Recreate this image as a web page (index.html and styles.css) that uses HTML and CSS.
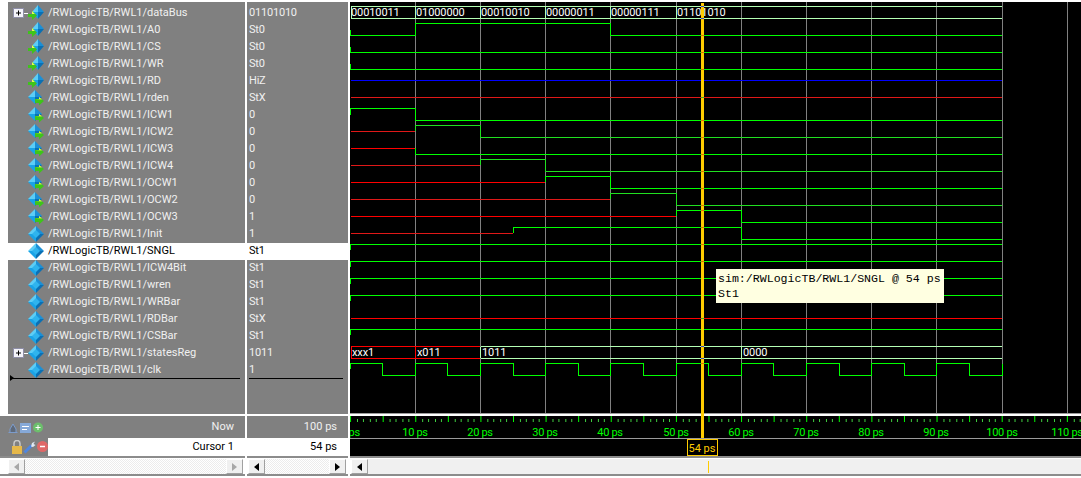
FILE: index.html
```html
<!DOCTYPE html>
<html lang="en">
<head>
    <meta charset="UTF-8">
    <title>Wave</title>
    <link rel="stylesheet" href="styles.css">
</head>
<body>

<svg class="defs" width="0" height="0">
    <defs>
        <symbol id="gem" viewBox="0 0 16 16">
            <polygon points="8,0 8,8 0,8" fill="#5ccdf6"/>
            <polygon points="8,0 16,8 8,8" fill="#1b8fd6"/>
            <polygon points="0,8 8,8 8,16" fill="#1aa3e6"/>
            <polygon points="16,8 8,8 8,16" fill="#0a70b4"/>
            <polygon points="8,4 12,8 8,12 4,8" fill="#2fb4ee"/>
        </symbol>
        <symbol id="sig-in" viewBox="0 0 16 16">
            <polygon points="10,0 10,7 4,7" fill="#5ccdf6"/>
            <polygon points="10,0 16,7 10,7" fill="#1b8fd6"/>
            <polygon points="4,7 10,7 10,14" fill="#1aa3e6"/>
            <polygon points="16,7 10,7 10,14" fill="#0a70b4"/>
            <polygon points="0,9 4,9 4,6 9,10.5 4,15 4,12 0,12" fill="#3ec41a"/>
            <polygon points="0,9 4,9 4,6 7,9" fill="#e4ff50"/>
        </symbol>
        <symbol id="sig-out" viewBox="0 0 16 16">
            <polygon points="7,0 7,7 0,7" fill="#5ccdf6"/>
            <polygon points="7,0 14,7 7,7" fill="#1b8fd6"/>
            <polygon points="0,7 7,7 7,14" fill="#1aa3e6"/>
            <polygon points="14,7 7,7 7,14" fill="#0a70b4"/>
            <polygon points="7,9 11,9 11,7 16,11 11,15.5 11,13 7,13" fill="#3ec41a"/>
            <polygon points="7,9 11,9 11,7 14,9.5" fill="#e4ff50"/>
        </symbol>
        <symbol id="plus" viewBox="0 0 11 10">
            <rect x="0.5" y="0.5" width="10" height="9" fill="#f4f4fa" stroke="#8f8fa8"/>
            <path d="M3 5H8M5.5 2.5V7.5" stroke="#000" stroke-width="1" fill="none"/>
        </symbol>
    </defs>
</svg>

<div class="screen">

    <!-- signal names -->
    <div class="names">
        <div class="row"><span class="tree"><svg class="plus"><use href="#plus"/></svg><i class="stub"></i></span><svg class="icon"><use href="#sig-in"/></svg>/RWLogicTB/RWL1/dataBus</div>
        <div class="row"><span class="tree"></span><svg class="icon"><use href="#sig-in"/></svg>/RWLogicTB/RWL1/A0</div>
        <div class="row"><span class="tree"></span><svg class="icon"><use href="#sig-in"/></svg>/RWLogicTB/RWL1/CS</div>
        <div class="row"><span class="tree"></span><svg class="icon"><use href="#sig-in"/></svg>/RWLogicTB/RWL1/WR</div>
        <div class="row"><span class="tree"></span><svg class="icon"><use href="#sig-in"/></svg>/RWLogicTB/RWL1/RD</div>
        <div class="row"><span class="tree"></span><svg class="icon"><use href="#sig-out"/></svg>/RWLogicTB/RWL1/rden</div>
        <div class="row"><span class="tree"></span><svg class="icon"><use href="#sig-out"/></svg>/RWLogicTB/RWL1/ICW1</div>
        <div class="row"><span class="tree"></span><svg class="icon"><use href="#sig-out"/></svg>/RWLogicTB/RWL1/ICW2</div>
        <div class="row"><span class="tree"></span><svg class="icon"><use href="#sig-out"/></svg>/RWLogicTB/RWL1/ICW3</div>
        <div class="row"><span class="tree"></span><svg class="icon"><use href="#sig-out"/></svg>/RWLogicTB/RWL1/ICW4</div>
        <div class="row"><span class="tree"></span><svg class="icon"><use href="#sig-out"/></svg>/RWLogicTB/RWL1/OCW1</div>
        <div class="row"><span class="tree"></span><svg class="icon"><use href="#sig-out"/></svg>/RWLogicTB/RWL1/OCW2</div>
        <div class="row"><span class="tree"></span><svg class="icon"><use href="#sig-out"/></svg>/RWLogicTB/RWL1/OCW3</div>
        <div class="row"><span class="tree"></span><svg class="icon"><use href="#gem"/></svg>/RWLogicTB/RWL1/Init</div>
        <div class="row selected"><span class="tree"></span><svg class="icon"><use href="#gem"/></svg>/RWLogicTB/RWL1/SNGL</div>
        <div class="row"><span class="tree"></span><svg class="icon"><use href="#gem"/></svg>/RWLogicTB/RWL1/ICW4Bit</div>
        <div class="row"><span class="tree"></span><svg class="icon"><use href="#gem"/></svg>/RWLogicTB/RWL1/wren</div>
        <div class="row"><span class="tree"></span><svg class="icon"><use href="#gem"/></svg>/RWLogicTB/RWL1/WRBar</div>
        <div class="row"><span class="tree"></span><svg class="icon"><use href="#gem"/></svg>/RWLogicTB/RWL1/RDBar</div>
        <div class="row"><span class="tree"></span><svg class="icon"><use href="#gem"/></svg>/RWLogicTB/RWL1/CSBar</div>
        <div class="row"><span class="tree"><svg class="plus"><use href="#plus"/></svg><i class="stub"></i></span><svg class="icon"><use href="#gem"/></svg>/RWLogicTB/RWL1/statesReg</div>
        <div class="row"><span class="tree"></span><svg class="icon"><use href="#gem"/></svg>/RWLogicTB/RWL1/clk</div>
        <div class="drop-line has-arrow"></div>
    </div>

    <!-- signal values -->
    <div class="values">
        <div class="row">01101010</div>
        <div class="row">St0</div>
        <div class="row">St0</div>
        <div class="row">St0</div>
        <div class="row">HiZ</div>
        <div class="row">StX</div>
        <div class="row">0</div>
        <div class="row">0</div>
        <div class="row">0</div>
        <div class="row">0</div>
        <div class="row">0</div>
        <div class="row">0</div>
        <div class="row">1</div>
        <div class="row">1</div>
        <div class="row selected">St1</div>
        <div class="row">St1</div>
        <div class="row">St1</div>
        <div class="row">St1</div>
        <div class="row">StX</div>
        <div class="row">St1</div>
        <div class="row">1011</div>
        <div class="row">1</div>
        <div class="drop-line"></div>
    </div>

    <!-- waveform canvas -->
    <svg class="wave" viewBox="350 2 731 454" width="731" height="454">
        <defs>
            <pattern id="ticks" patternUnits="userSpaceOnUse" x="350.1" y="416" width="32.58" height="7">
                <path class="tick-major" d="M0.5 0V6"/>
                <path class="tick-minor" d="M7 3V6M13.5 3V6M20 3V6M26.5 3V6"/>
            </pattern>
        </defs>

        <path class="grid" d="M415.5 2V413M480.5 2V413M545.5 2V413M610.5 2V413M676.5 2V413M741.5 2V413M806.5 2V413M871.5 2V413M936.5 2V413M1002.5 2V413M1067.5 2V413"/>

        <path class="bus" d="M351 6.5H1002M351 18.5H1002M351.5 7V18M415.5 7V18M480.5 7V18M545.5 7V18M610.5 7V18M676.5 7V18"/>
        <text class="bus-text" x="351" y="16">00010011</text>
        <text class="bus-text" x="416" y="16">01000000</text>
        <text class="bus-text" x="481" y="16">00010010</text>
        <text class="bus-text" x="546" y="16">00000011</text>
        <text class="bus-text" x="611" y="16">00000111</text>
        <text class="bus-text" x="677" y="16">01101010</text>

        <path class="hi" d="M350.5 30V35.5H415.5V23.5H610.5V35.5H1002"/>
        <path class="hi" d="M350.5 47V52.5H1002"/>
        <path class="hi" d="M350.5 64V69.5H1002"/>
        <path class="z" d="M351 80.5H1002"/>
        <path class="x dim" d="M351 97.5H1002"/>
        <path class="hi" d="M350.5 115V108.5H415.5V120.5H1002"/>
        <path class="x dim" d="M351 131.5H415"/>
        <path class="hi dim" d="M415.5 131V125.5H480.5V137.5H1002"/>
        <path class="x" d="M351 148.5H415"/>
        <path class="hi" d="M415.5 148V154.5H1002"/>
        <path class="x dim" d="M351 165.5H480"/>
        <path class="hi dim" d="M480.5 165V159.5H545.5V171.5H1002"/>
        <path class="x" d="M351 182.5H545"/>
        <path class="hi" d="M545.5 182V176.5H610.5V188.5H1002"/>
        <path class="x dim" d="M351 199.5H610"/>
        <path class="hi dim" d="M610.5 199V193.5H676.5V205.5H1002"/>
        <path class="x" d="M351 216.5H676"/>
        <path class="hi" d="M676.5 216V210.5H741.5V222.5H1002"/>
        <path class="x dim" d="M351 233.5H513"/>
        <path class="hi" d="M513.5 233V227.5H741.5V239.5H1002"/>
        <path class="hi" d="M350.5 250V244.5H1002"/>
        <path class="hi" d="M350.5 267V261.5H1002"/>
        <path class="hi" d="M350.5 284V278.5H1002"/>
        <path class="hi" d="M350.5 301V295.5H1002"/>
        <path class="x" d="M351 318.5H1002"/>
        <path class="hi" d="M350.5 335V329.5H1002"/>

        <path class="bus" d="M481 346.5H1002M481 358.5H1002M480.5 347V358M741.5 347V358"/>
        <path class="x" d="M351 346.5H480M351 358.5H480M351.5 347V358M415.5 347V358"/>
        <text class="bus-text" x="352" y="356">xxx1</text>
        <text class="bus-text" x="417" y="356">x011</text>
        <text class="bus-text" x="482" y="356">1011</text>
        <text class="bus-text" x="743" y="356">0000</text>

        <path class="hi" d="M350.5 369V363.5H382.5V375.5H415.5V363.5H447.5V375.5H480.5V363.5H513.5V375.5H545.5V363.5H578.5V375.5H610.5V363.5H643.5V375.5H676.5V363.5H708.5V375.5H741.5V363.5H773.5V375.5H806.5V363.5H839.5V375.5H871.5V363.5H904.5V375.5H936.5V363.5H969.5V375.5H1002.5V363.5"/>

        <!-- ruler -->
        <rect class="sep" x="350" y="413" width="731" height="1"/>
        <rect class="sep-light" x="350" y="414" width="731" height="2"/>
        <rect x="350" y="416" width="731" height="7" fill="url(#ticks)"/>
        <text class="ruler-text" x="350" y="436">0 ps</text>
        <text class="ruler-text" x="415" y="436">10 ps</text>
        <text class="ruler-text" x="480" y="436">20 ps</text>
        <text class="ruler-text" x="545" y="436">30 ps</text>
        <text class="ruler-text" x="610" y="436">40 ps</text>
        <text class="ruler-text" x="676" y="436">50 ps</text>
        <text class="ruler-text" x="741" y="436">60 ps</text>
        <text class="ruler-text" x="806" y="436">70 ps</text>
        <text class="ruler-text" x="871" y="436">80 ps</text>
        <text class="ruler-text" x="936" y="436">90 ps</text>
        <text class="ruler-text" x="1002" y="436">100 ps</text>
        <text class="ruler-text" x="1067" y="436">110 ps</text>
        <rect class="sep" x="350" y="438" width="731" height="1"/>

        <!-- cursor -->
        <rect class="cursor" x="701" y="3" width="3" height="435"/>
        <path class="cross-green" d="M701 35.5H704M701 52.5H704M701 69.5H704M701 120.5H704M701 137.5H704M701 154.5H704M701 171.5H704M701 188.5H704M701 205.5H704M701 210.5H704M701 227.5H704M701 244.5H704M701 261.5H704M701 363.5H704"/>
        <path class="cross-red" d="M701 97.5H704M701 318.5H704"/>
        <path class="cross-blue" d="M701 6.5H704M701 18.5H704M701 346.5H704M701 358.5H704"/>
        <rect class="cursor-box" x="687.5" y="439.5" width="30" height="16"/>
        <text class="cursor-text" x="702" y="452">54 ps</text>
    </svg>

    <!-- now / cursor footer -->
    <div class="foot foot-names">
        <div class="foot-row">
            <svg class="tools" width="36" height="12" viewBox="0 0 36 12">
                <path d="M0.5 10.5H9.5M2 10V7L5 2L8 7V10" fill="#5f6a7a" stroke="#7c9ccc"/>
                <rect x="12" y="1" width="11" height="10" fill="#86a9d8"/>
                <path d="M14 4.5H21M14 7.5H19" stroke="#fff"/>
                <circle cx="30" cy="5.5" r="5" fill="#6cbf6c"/>
                <path d="M27.5 5.5H32.5M30 3V8" stroke="#fff"/>
            </svg>
            <span class="foot-label">Now</span>
        </div>
        <div class="foot-row">
            <svg class="tools tools-low" width="37" height="14" viewBox="0 0 37 14">
                <rect x="1" y="6" width="10" height="8" fill="#e6b84a"/>
                <path d="M3 6V3.5A3 3 0 0 1 9 3.5V6" fill="none" stroke="#c8c8c8" stroke-width="1.5"/>
                <path d="M13.5 12.5L20.5 5.5" stroke="#4f86e0" stroke-width="3" fill="none"/>
                <path d="M20 6.5L21 3L24 1.5L22.5 4L24.5 5L22 7Z" fill="#dfe8f4"/>
                <circle cx="31.5" cy="6.5" r="5.5" fill="#e06868"/>
                <path d="M29 6.5H34" stroke="#fff" stroke-width="1.5"/>
            </svg>
            <span class="foot-label cursor-label">Cursor 1</span>
        </div>
    </div>
    <div class="foot foot-values">
        <div class="foot-row"><span class="foot-label">100 ps</span></div>
        <div class="foot-row"><span class="foot-label cursor-label">54 ps</span></div>
    </div>

    <!-- scrollbars -->
    <div class="scroll scroll-names">
        <span class="sb-btn disabled"><i class="arrow-left"></i></span>
        <span class="sb-track"></span>
        <span class="sb-btn disabled"><i class="arrow-right"></i></span>
    </div>
    <div class="scroll scroll-values">
        <span class="sb-btn"><i class="arrow-left"></i></span>
        <span class="sb-track"></span>
        <span class="sb-btn"><i class="arrow-right"></i></span>
    </div>
    <div class="scroll scroll-wave">
        <span class="sb-btn"><i class="arrow-left"></i></span>
        <span class="sb-track plain"><i class="sb-mark"></i></span>
    </div>

    <div class="tooltip">sim:/RWLogicTB/RWL1/SNGL @ 54 ps<br>St1</div>
</div>

</body>
</html>
```
FILE: styles.css
```css
html, body {
    margin: 0;
    padding: 0;
    background-color: #fff;
    overflow: hidden;
}

.defs {
    position: absolute;
}

.screen {
    position: relative;
    width: 1081px;
    height: 478px;
    display: grid;
    grid-template-columns: 245px 101px 731px;
    grid-template-rows: 414px 44px 20px;
    column-gap: 2px;
    font-family: Roboto, "Liberation Sans", sans-serif;
    font-size: 11px;
    color: #f0f0f0;
}

.names, .values {
    background-color: #808080;
    margin-top: 2px;
    padding-top: 3px;
}

.names {
    margin-left: 8px;
}

.values {
    letter-spacing: -0.2px;
}

.row {
    height: 17px;
    line-height: 16px;
    display: flex;
    align-items: flex-start;
    white-space: nowrap;
}

.values .row {
    padding-left: 2px;
}

.row.selected {
    background-color: #fff;
    color: #000;
}

.tree {
    position: relative;
    width: 20px;
    height: 14px;
    flex: none;
}

.plus {
    width: 11px;
    height: 10px;
    margin-left: 5px;
    display: block;
    margin-top: 3px;
}

.stub {
    position: absolute;
    left: 16px;
    top: 8px;
    width: 4px;
    height: 1px;
    background-color: #fff;
}

.icon {
    width: 16px;
    height: 16px;
    flex: none;
    margin: 0 4px 0 0;
}

.drop-line {
    position: relative;
    height: 1px;
    margin: -1px 5px 0 4px;
    background-color: #000;
}

.values .drop-line {
    margin: -1px 5px 0 2px;
}

.has-arrow::before {
    content: "";
    position: absolute;
    left: -2px;
    top: -3px;
    border-left: 4px solid #000;
    border-top: 3px solid transparent;
    border-bottom: 3px solid transparent;
}

/* waveform */
.wave {
    grid-column: 3;
    grid-row: 1 / 3;
    margin-top: 2px;
    background-color: #000;
    shape-rendering: crispEdges;
}

.wave path {
    fill: none;
    stroke-width: 1;
}

.grid { stroke: #808080; }
.hi { stroke: #00ff00; }
.hi.dim { stroke: #20e020; }
.x { stroke: #ff0000; }
.x.dim { stroke: #e01818; }
.z { stroke: #0000ff; }
.bus { stroke: #b4ffb4; }

.bus-text {
    fill: #fff;
    font-size: 11px;
    letter-spacing: -0.1px;
}

.tick-major { stroke: #00ff00; }
.tick-minor { stroke: #40d040; }

.sep { fill: #9a9a9a; }
.sep-light { fill: #fff; }

.ruler-text {
    fill: #00ff00;
    font-size: 11px;
    letter-spacing: -0.3px;
    text-anchor: middle;
}

.cursor { fill: #ffcc00; }
.cross-green { stroke: #e07000; }
.cross-red { stroke: #30b030; }
.cross-blue { stroke: #4048c0; }

.cursor-box {
    fill: #000;
    stroke: #ffcc00;
}

.cursor-text {
    fill: #ffcc00;
    font-size: 11px;
    text-anchor: middle;
}

/* footer */
.foot {
    grid-row: 2;
    margin-top: 2px;
    background-color: #808080;
    border-bottom: 2px solid #8c8c8c;
}

.foot-names { grid-column: 1; }
.foot-values { grid-column: 2; }

.foot-row {
    display: flex;
    justify-content: flex-end;
    height: 18px;
    line-height: 18px;
}

.foot-row:first-child {
    height: 22px;
    line-height: 22px;
}

.foot-label {
    flex: 1;
    text-align: right;
    padding-right: 11px;
}

.cursor-label {
    background-color: #fff;
    color: #000;
}

.tools {
    flex: none;
    margin: 6px 3px 0 8px;
}

.tools-low {
    margin: 2px 0 0 11px;
}

/* scrollbars */
.scroll {
    grid-row: 3;
    display: flex;
    align-items: flex-start;
    padding: 1px 2px 0 1px;
    height: 15px;
    border-bottom: 2px solid #8c8c8c;
}

.scroll-names {
    padding-left: 8px;
}

.scroll-wave {
    border-top: 2px solid #8c8c8c;
    margin-top: -2px;
    padding-right: 0;
}

.sb-btn {
    flex: none;
    width: 15px;
    height: 13px;
    display: flex;
    align-items: center;
    justify-content: center;
    background-color: #f0f0f0;
    border: 1px solid;
    border-color: #fff #a0a0a0 #a0a0a0 #fff;
}

.sb-track {
    position: relative;
    flex: 1;
    height: 15px;
    background: repeating-conic-gradient(#fff 0 25%, #ececec 0 50%) 0 0 / 2px 2px;
}

.sb-track.plain {
    background: #f0f0f0;
}

.sb-mark {
    position: absolute;
    left: 340px;
    top: 2px;
    width: 1px;
    height: 12px;
    background-color: #ffcc00;
}

.arrow-left, .arrow-right {
    border-top: 4px solid transparent;
    border-bottom: 4px solid transparent;
}

.arrow-left { border-right: 5px solid #000; }
.arrow-right { border-left: 5px solid #000; }

.disabled .arrow-left { border-right-color: #a8a8a8; }
.disabled .arrow-right { border-left-color: #a8a8a8; }

.tooltip {
    position: absolute;
    left: 716px;
    top: 269px;
    width: 228px;
    height: 34px;
    padding-left: 2px;
    background-color: #ffffe1;
    color: #000;
    font-family: "Liberation Mono", monospace;
    font-size: 11.6px;
    line-height: 15px;
    padding-top: 2px;
    box-sizing: border-box;
    white-space: nowrap;
}
```
